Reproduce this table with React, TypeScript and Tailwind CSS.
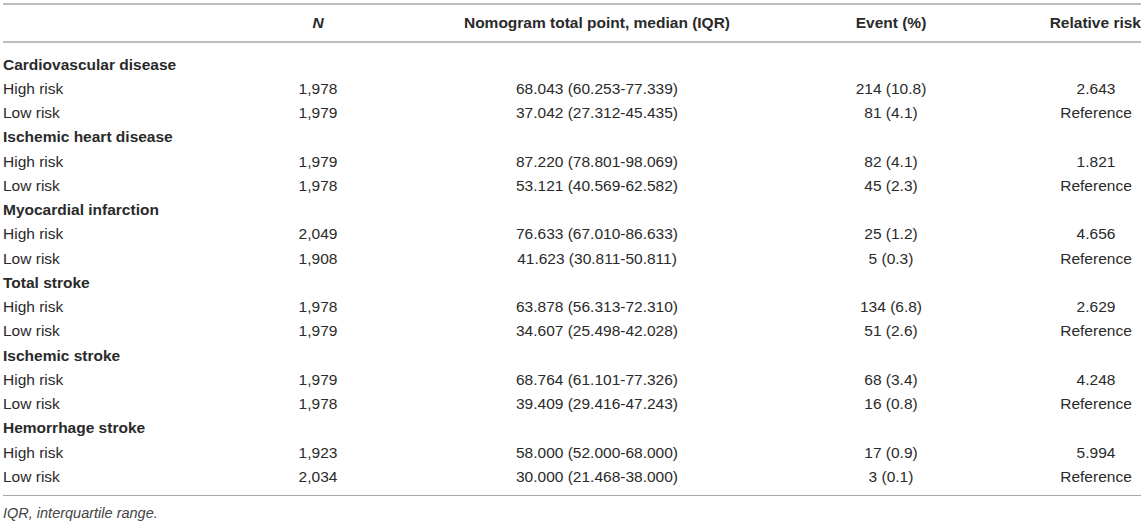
import React from "react";

type Row = { label: string; n: string; nomo: string; ev: string; rr: string };
const groups: { title: string; rows: Row[] }[] = [
  {
    title: "Cardiovascular disease",
    rows: [
      { label: "High risk", n: "1,978", nomo: "68.043 (60.253-77.339)", ev: "214 (10.8)", rr: "2.643" },
      { label: "Low risk", n: "1,979", nomo: "37.042 (27.312-45.435)", ev: "81 (4.1)", rr: "Reference" },
    ],
  },
  {
    title: "Ischemic heart disease",
    rows: [
      { label: "High risk", n: "1,979", nomo: "87.220 (78.801-98.069)", ev: "82 (4.1)", rr: "1.821" },
      { label: "Low risk", n: "1,978", nomo: "53.121 (40.569-62.582)", ev: "45 (2.3)", rr: "Reference" },
    ],
  },
  {
    title: "Myocardial infarction",
    rows: [
      { label: "High risk", n: "2,049", nomo: "76.633 (67.010-86.633)", ev: "25 (1.2)", rr: "4.656" },
      { label: "Low risk", n: "1,908", nomo: "41.623 (30.811-50.811)", ev: "5 (0.3)", rr: "Reference" },
    ],
  },
  {
    title: "Total stroke",
    rows: [
      { label: "High risk", n: "1,978", nomo: "63.878 (56.313-72.310)", ev: "134 (6.8)", rr: "2.629" },
      { label: "Low risk", n: "1,979", nomo: "34.607 (25.498-42.028)", ev: "51 (2.6)", rr: "Reference" },
    ],
  },
  {
    title: "Ischemic stroke",
    rows: [
      { label: "High risk", n: "1,979", nomo: "68.764 (61.101-77.326)", ev: "68 (3.4)", rr: "4.248" },
      { label: "Low risk", n: "1,978", nomo: "39.409 (29.416-47.243)", ev: "16 (0.8)", rr: "Reference" },
    ],
  },
  {
    title: "Hemorrhage stroke",
    rows: [
      { label: "High risk", n: "1,923", nomo: "58.000 (52.000-68.000)", ev: "17 (0.9)", rr: "5.994" },
      { label: "Low risk", n: "2,034", nomo: "30.000 (21.468-38.000)", ev: "3 (0.1)", rr: "Reference" },
    ],
  },
];

const grid = "grid grid-cols-[248px_134px_424px_164px_168px] items-center";

export default function App() {
  return (
    <div
      className="w-[1145px] h-[524px] bg-white text-[#2a2a2a] overflow-hidden"
      style={{ fontFamily: '"Liberation Sans", Arial, sans-serif' }}
    >
      <div className="ml-[3px] w-[1138px] pt-[3px]">
        <div className="border-t-2 border-[#bdbdbd]" />
        <div className={`${grid} h-[36px] text-[15.5px] font-bold`}>
          <div />
          <div className="text-center italic">N</div>
          <div className="text-center">Nomogram total point, median (IQR)</div>
          <div className="text-center">Event (%)</div>
          <div className="text-right whitespace-nowrap">Relative risk</div>
        </div>
        <div className="border-t-2 border-[#bdbdbd]" />
        <div className="pt-[9px] pb-[6px] text-[15.5px]">
          {groups.map((g) => (
            <React.Fragment key={g.title}>
              <div className={`${grid} h-[24.25px] font-bold`}>
                <div className="whitespace-nowrap">{g.title}</div>
              </div>
              {g.rows.map((r, i) => (
                <div key={i} className={`${grid} h-[24.25px]`}>
                  <div>{r.label}</div>
                  <div className="text-center">{r.n}</div>
                  <div className="text-center">{r.nomo}</div>
                  <div className="text-center">{r.ev}</div>
                  <div className="pl-[78px] text-center">{r.rr}</div>
                </div>
              ))}
            </React.Fragment>
          ))}
        </div>
        <div className="border-t border-[#a8a8a8]" />
        <div className="pt-[8px] leading-[18px] text-[14.5px] italic text-[#444]">IQR, interquartile range.</div>
      </div>
    </div>
  );
}
